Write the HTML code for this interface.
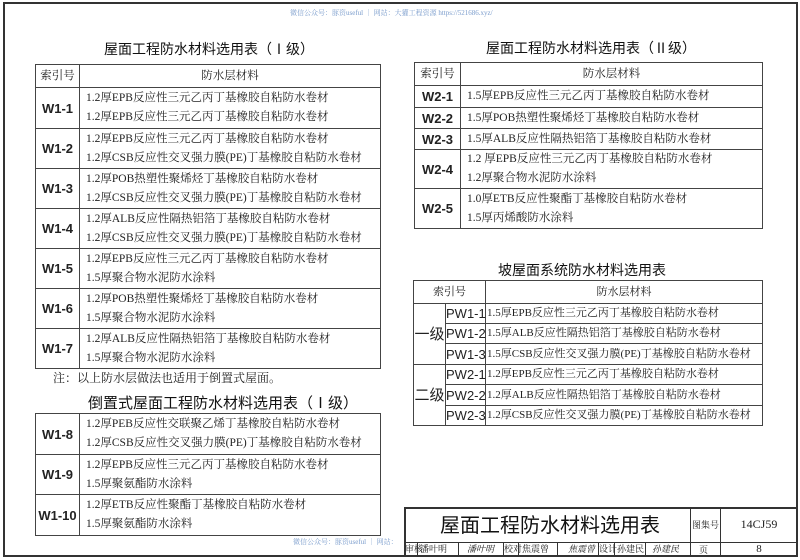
<!DOCTYPE html>
<html><head><meta charset="utf-8"><style>
*{margin:0;padding:0;box-sizing:border-box}
body{width:800px;height:560px;background:#fff;position:relative;overflow:hidden;font-family:"Liberation Serif","Noto Serif CJK SC",serif;color:#222}
.a{position:absolute}
.frame{left:3px;top:2px;width:795px;height:555px;border:2px solid #333}
table{position:absolute;border-collapse:collapse}
td{border:1.5px solid #444;font-size:11.5px;padding:0 0 0 6px;white-space:nowrap;line-height:19px}
td.i{font-family:"Liberation Sans","Noto Sans CJK SC",sans-serif;font-weight:bold;font-size:13px;text-align:center;padding:0}
td.h{text-align:center;padding:0}
.t{font-family:"Liberation Sans","Noto Sans CJK SC",sans-serif;font-size:14px;color:#111}
.wm{font-size:7px;color:#7a9ccc}
.s td{font-size:11px}
.s td.i{font-size:13px}
</style></head><body>
<div class="a frame"></div>
<div class="a wm" style="left:290px;top:8px">微信公众号：豚资useful ｜ 网站：大獾工程资源 https://521686.xyz/</div>
<div class="a wm" style="left:293px;top:537px">微信公众号：豚资useful ｜ 网站：</div>

<div class="a t" style="left:104px;top:39px">屋面工程防水材料选用表（Ⅰ级）</div>
<table style="left:35px;top:64px;width:346px">
<tr style="height:23px"><td class="h" style="width:44px">索引号</td><td class="h">防水层材料</td></tr>
<tr style="height:41px"><td class="i">W1-1</td><td>1.2厚EPB反应性三元乙丙丁基橡胶自粘防水卷材<br>1.2厚EPB反应性三元乙丙丁基橡胶自粘防水卷材</td></tr>
<tr style="height:40px"><td class="i">W1-2</td><td>1.2厚EPB反应性三元乙丙丁基橡胶自粘防水卷材<br>1.2厚CSB反应性交叉强力膜(PE)丁基橡胶自粘防水卷材</td></tr>
<tr style="height:40px"><td class="i">W1-3</td><td>1.2厚POB热塑性聚烯烃丁基橡胶自粘防水卷材<br>1.2厚CSB反应性交叉强力膜(PE)丁基橡胶自粘防水卷材</td></tr>
<tr style="height:40px"><td class="i">W1-4</td><td>1.2厚ALB反应性隔热铝箔丁基橡胶自粘防水卷材<br>1.2厚CSB反应性交叉强力膜(PE)丁基橡胶自粘防水卷材</td></tr>
<tr style="height:40px"><td class="i">W1-5</td><td>1.2厚EPB反应性三元乙丙丁基橡胶自粘防水卷材<br>1.5厚聚合物水泥防水涂料</td></tr>
<tr style="height:40px"><td class="i">W1-6</td><td>1.2厚POB热塑性聚烯烃丁基橡胶自粘防水卷材<br>1.5厚聚合物水泥防水涂料</td></tr>
<tr style="height:40px"><td class="i">W1-7</td><td>1.2厚ALB反应性隔热铝箔丁基橡胶自粘防水卷材<br>1.5厚聚合物水泥防水涂料</td></tr>
</table>
<div class="a" style="left:53px;top:369px;font-size:12px">注：以上防水层做法也适用于倒置式屋面。</div>
<div class="a t" style="left:88px;top:392px;font-size:15px">倒置式屋面工程防水材料选用表（Ⅰ级）</div>
<table style="left:35px;top:413px;width:346px">
<tr style="height:41px"><td class="i" style="width:44px">W1-8</td><td>1.2厚PEB反应性交联聚乙烯丁基橡胶自粘防水卷材<br>1.2厚CSB反应性交叉强力膜(PE)丁基橡胶自粘防水卷材</td></tr>
<tr style="height:40px"><td class="i">W1-9</td><td>1.2厚EPB反应性三元乙丙丁基橡胶自粘防水卷材<br>1.5厚聚氨酯防水涂料</td></tr>
<tr style="height:41px"><td class="i">W1-10</td><td>1.2厚ETB反应性聚酯丁基橡胶自粘防水卷材<br>1.5厚聚氨酯防水涂料</td></tr>
</table>

<div class="a t" style="left:486px;top:38px">屋面工程防水材料选用表（Ⅱ级）</div>
<table style="left:414px;top:62px;width:349px">
<tr style="height:23px"><td class="h" style="width:46px">索引号</td><td class="h">防水层材料</td></tr>
<tr style="height:22px"><td class="i">W2-1</td><td>1.5厚EPB反应性三元乙丙丁基橡胶自粘防水卷材</td></tr>
<tr style="height:21px"><td class="i">W2-2</td><td>1.5厚POB热塑性聚烯烃丁基橡胶自粘防水卷材</td></tr>
<tr style="height:21px"><td class="i">W2-3</td><td>1.5厚ALB反应性隔热铝箔丁基橡胶自粘防水卷材</td></tr>
<tr style="height:38px"><td class="i">W2-4</td><td>1.2 厚EPB反应性三元乙丙丁基橡胶自粘防水卷材<br>1.2厚聚合物水泥防水涂料</td></tr>
<tr style="height:40px"><td class="i">W2-5</td><td>1.0厚ETB反应性聚酯丁基橡胶自粘防水卷材<br>1.5厚丙烯酸防水涂料</td></tr>
</table>

<div class="a t" style="left:498px;top:260px">坡屋面系统防水材料选用表</div>
<table class="s" style="left:413px;top:280px;width:350px;table-layout:fixed">
<col style="width:32px"><col style="width:40px"><col>
<tr style="height:23px"><td class="h" colspan="2">索引号</td><td class="h">防水层材料</td></tr>
<tr style="height:20px"><td class="i" rowspan="3" style="font-weight:normal;font-size:15px">一级</td><td class="i" style="font-weight:normal">PW1-1</td><td style="padding-left:1px">1.5厚EPB反应性三元乙丙丁基橡胶自粘防水卷材</td></tr>
<tr style="height:20px"><td class="i" style="font-weight:normal">PW1-2</td><td style="padding-left:1px">1.5厚ALB反应性隔热铝箔丁基橡胶自粘防水卷材</td></tr>
<tr style="height:21px"><td class="i" style="font-weight:normal">PW1-3</td><td style="padding-left:1px">1.5厚CSB反应性交叉强力膜(PE)丁基橡胶自粘防水卷材</td></tr>
<tr style="height:20px"><td class="i" rowspan="3" style="font-weight:normal;font-size:15px">二级</td><td class="i" style="font-weight:normal">PW2-1</td><td style="padding-left:1px">1.2厚EPB反应性三元乙丙丁基橡胶自粘防水卷材</td></tr>
<tr style="height:21px"><td class="i" style="font-weight:normal">PW2-2</td><td style="padding-left:1px">1.2厚ALB反应性隔热铝箔丁基橡胶自粘防水卷材</td></tr>
<tr style="height:20px"><td class="i" style="font-weight:normal">PW2-3</td><td style="padding-left:1px">1.2厚CSB反应性交叉强力膜(PE)丁基橡胶自粘防水卷材</td></tr>
</table>

<div class="a" style="left:404px;top:507px;width:394px;height:50px;border:2px solid #333;border-right:none;border-bottom:none"></div>
<div class="a" style="left:404px;top:542px;width:394px;border-top:1.5px solid #333"></div>
<div class="a" style="left:690px;top:507px;height:50px;border-left:1.5px solid #333"></div>
<div class="a" style="left:720px;top:507px;height:50px;border-left:1.5px solid #333"></div>
<div class="a t" style="left:410px;top:512px;width:280px;text-align:center;font-size:20px;line-height:28px">屋面工程防水材料选用表</div>
<div class="a" style="left:692px;top:518px;font-size:9px">图集号</div>
<div class="a" style="left:720px;top:517px;width:78px;text-align:center;font-size:12px">14CJ59</div>
<div class="a" style="left:720px;top:543px;width:78px;text-align:center;font-size:11px">8</div>
<div class="a" style="left:699px;top:543px;font-size:9px">页</div>
<div class="a" style="left:404px;top:543px;width:286px;height:14px;font-size:9px;line-height:13px;white-space:nowrap">
<span class="a" style="left:1px">审核</span><span class="a" style="left:13px;height:13px;border-left:1px solid #333;padding-left:2px">潘叶明</span>
<span class="a" style="left:54px;height:13px;border-left:1px solid #333;padding-left:8px;font-style:italic">潘叶明</span>
<span class="a" style="left:99px;height:13px;border-left:1px solid #333">校对</span><span class="a" style="left:114px;height:13px;border-left:1px solid #333;padding-left:3px">焦震曾</span>
<span class="a" style="left:153px;height:13px;border-left:1px solid #333;padding-left:10px;font-style:italic">焦震曾</span>
<span class="a" style="left:194px;height:13px;border-left:1px solid #333">设计</span><span class="a" style="left:210px;height:13px;border-left:1px solid #333;padding-left:2px">孙建民</span>
<span class="a" style="left:241px;height:13px;border-left:1px solid #333;padding-left:6px;font-style:italic">孙建民</span>
</div>
</body></html>
